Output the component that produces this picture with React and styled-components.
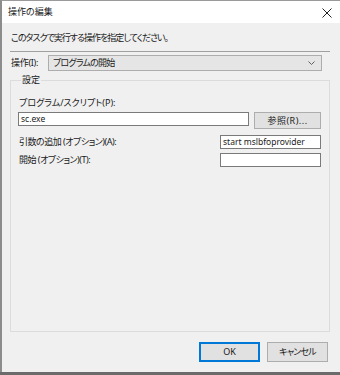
import styled, { createGlobalStyle } from "styled-components";

const GlobalStyle = createGlobalStyle`
  html, body {
    margin: 0;
    padding: 0;
    background: #6b6b6b;
  }
  body {
    font-family: "Noto Sans", "Noto Sans CJK JP", sans-serif;
    font-feature-settings: "palt";
    font-size: 9px;
    color: #1a1a1a;
  }
`;

const Window = styled.div`
  width: 338px;
  height: 371px;
  border-top: 1px solid #9a9a9a;
  border-left: 2px solid #8c8c8c;
  display: flex;
  flex-direction: column;
  background: #f0f0f0;
`;

const TitleBar = styled.div`
  height: 22px;
  background: #fff;
  display: flex;
  align-items: center;
  justify-content: space-between;
  padding: 0 8px 0 6px;
  flex-shrink: 0;
`;

const Title = styled.div`
  font-size: 9px;
  line-height: 12px;
`;

const CloseBtn = styled.svg`
  width: 10px;
  height: 10px;
  margin-top: 1px;
`;

const Body = styled.div`
  flex: 1;
  display: flex;
  flex-direction: column;
  padding: 8px 10px 10px 8px;
`;

const Desc = styled.div`
  line-height: 14px;
  padding-left: 1px;
  letter-spacing: -1px;
`;

const Separator = styled.div`
  height: 1px;
  background: #a0a0a0;
  margin-top: 6px;
`;

const ActionRow = styled.div`
  display: flex;
  align-items: center;
  margin-top: 3px;
  margin-right: 8px;
`;

const ActionLabel = styled.div`
  width: 37px;
  padding-left: 1px;
  line-height: 12px;
  letter-spacing: -0.3px;
`;

const Select = styled.div`
  flex: 1;
  height: 14px;
  background: #e5e5e5;
  border: 1px solid #adadad;
  display: flex;
  align-items: center;
  justify-content: space-between;
  padding: 0 6px 0 4px;
  line-height: 12px;
  letter-spacing: -0.8px;
`;

const Chevron = styled.svg`
  width: 7px;
  height: 4px;
`;

const Group = styled.div`
  flex: 1;
  margin-top: 9px;
  border: 1px solid #dcdcdc;
  padding: 0 8px 0 7px;
  display: flex;
  flex-direction: column;
`;

const Legend = styled.div`
  width: fit-content;
  margin: -7px 0 0 3px;
  padding: 0 1px;
  background: #f0f0f0;
  line-height: 12px;
`;

const FieldLabel = styled.div`
  line-height: 12px;
  padding-left: 1px;
  margin-top: ${(p) => p.$top || 0}px;
  letter-spacing: ${(p) => (p.$tight ? "-0.5px" : "0")};
`;

const FieldRow = styled.div`
  display: flex;
  align-items: ${(p) => (p.$center ? "center" : "flex-start")};
  justify-content: space-between;
  gap: 5px;
  margin-top: ${(p) => p.$top || 0}px;
`;

const TextBox = styled.div`
  box-sizing: border-box;
  width: ${(p) => (p.$wide ? "231px" : "101px")};
  height: 14px;
  background: #fff;
  border: 1px solid #7a7a7a;
  font-size: 8.5px;
  line-height: 12px;
  padding: 0 2px;
  white-space: nowrap;
  overflow: hidden;
`;

const Button = styled.div`
  box-sizing: border-box;
  width: ${(p) => p.$w || 61}px;
  height: ${(p) => p.$h || 20}px;
  background: #e1e1e1;
  border: ${(p) => (p.$primary ? "2px solid #0078d7" : "1px solid #adadad")};
  display: flex;
  align-items: center;
  justify-content: center;
  line-height: 12px;
  letter-spacing: ${(p) => p.$ls || 0}px;
`;

const Footer = styled.div`
  display: flex;
  justify-content: flex-end;
  gap: 7px;
  margin-top: 10px;
  margin-right: 2px;
`;

export default function App() {
  return (
    <>
      <GlobalStyle />
      <Window>
        <TitleBar>
          <Title>操作の編集</Title>
          <CloseBtn viewBox="0 0 10 10">
            <path d="M0.5 0.5 L9.5 9.5 M9.5 0.5 L0.5 9.5" stroke="#222" strokeWidth="1" fill="none" />
          </CloseBtn>
        </TitleBar>
        <Body>
          <Desc>このタスクで実行する操作を指定してください。</Desc>
          <Separator />
          <ActionRow>
            <ActionLabel>操作(I):</ActionLabel>
            <Select>
              <span>プログラムの開始</span>
              <Chevron viewBox="0 0 7 4">
                <path d="M0.5 0.5 L3.5 3.5 L6.5 0.5" stroke="#606060" strokeWidth="1" fill="none" />
              </Chevron>
            </Select>
          </ActionRow>
          <Group>
            <Legend>設定</Legend>
            <FieldLabel $top={11}>プログラム/スクリプト(P):</FieldLabel>
            <FieldRow $top={3}>
              <TextBox $wide>sc.exe</TextBox>
              <Button $w={67} $h={17} $ls={0.5}>参照(R)...</Button>
            </FieldRow>
            <FieldRow $top={6} $center>
              <FieldLabel $tight>引数の追加 (オプション)(A):</FieldLabel>
              <TextBox>start mslbfoprovider</TextBox>
            </FieldRow>
            <FieldRow $top={4} $center>
              <FieldLabel $tight>開始 (オプション)(T):</FieldLabel>
              <TextBox />
            </FieldRow>
          </Group>
          <Footer>
            <Button $primary>OK</Button>
            <Button $ls={-0.8}>キャンセル</Button>
          </Footer>
        </Body>
      </Window>
    </>
  );
}
